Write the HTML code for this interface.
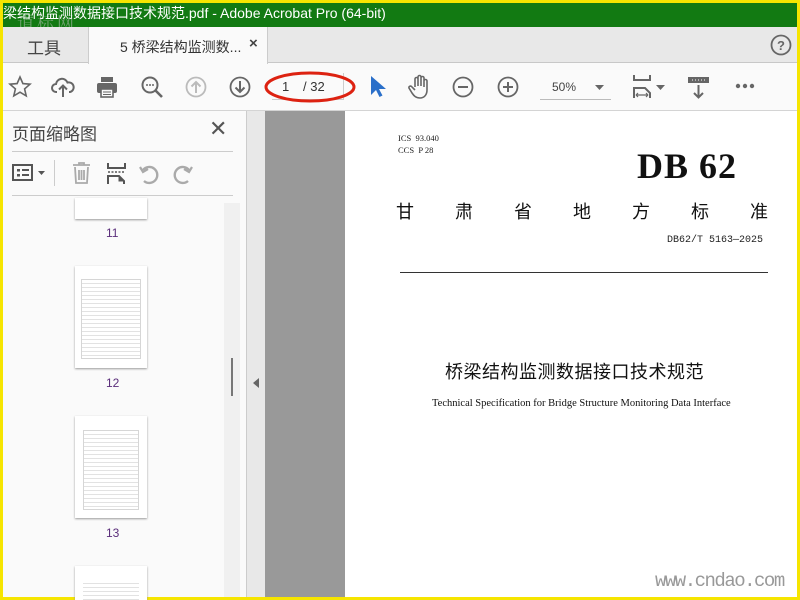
<!DOCTYPE html>
<html><head><meta charset="utf-8"><style>
*{margin:0;padding:0;box-sizing:border-box}
body{width:800px;height:600px;overflow:hidden;background:#f6e500;position:relative;font-family:"Liberation Sans","Noto Sans CJK SC",sans-serif}
.a{position:absolute}
svg{position:absolute;overflow:visible}
</style></head><body>
<div class="a" style="left:3px;top:3px;width:794px;height:594px;background:#fafafa"></div>
<!-- title bar -->
<div class="a" style="left:3px;top:3px;width:794px;height:24px;background:#127a12"></div>
<div class="a" style="left:17px;top:9px;color:rgba(200,200,200,.5);font-size:17px;letter-spacing:3px;font-family:'Noto Serif CJK SC',serif">道标网</div>
<div class="a" style="left:3px;top:4px;color:#fff;font-size:14px;line-height:18px;white-space:nowrap">梁结构监测数据接口技术规范.pdf - Adobe Acrobat Pro (64-bit)</div>
<!-- tab bar -->
<div class="a" style="left:3px;top:27px;width:794px;height:36px;background:#e8e8e8;border-bottom:1px solid #c8c8c8"></div>
<div class="a" style="left:88px;top:27px;width:180px;height:37px;background:#fafafa;border-left:1px solid #ccc;border-right:1px solid #ccc"></div>
<div class="a" style="left:27px;top:34px;font-size:17px;color:#444">工具</div>
<div class="a" style="left:120px;top:37px;font-size:14px;color:#333">5 桥梁结构监测数...</div>
<div class="a" style="left:249px;top:35px;font-size:15px;color:#444;font-weight:bold">×</div>
<svg style="left:770px;top:34px" width="22" height="22"><circle cx="11" cy="11" r="9.5" fill="none" stroke="#666" stroke-width="1.8"/><text x="11" y="16" font-size="13" font-weight="bold" text-anchor="middle" fill="#666" font-family="Liberation Sans">?</text></svg>
<!-- toolbar icons -->
<svg style="left:8px;top:75px" width="24" height="24"><path d="M12 2l2.9 6.6 7.1.6-5.4 4.7 1.6 7-6.2-3.7-6.2 3.7 1.6-7L2 9.2l7.1-.6z" fill="none" stroke="#666" stroke-width="1.6"/></svg>
<svg style="left:51px;top:75px" width="24" height="24"><path d="M6 17H5a4 4 0 010-8 6 6 0 0111.5-1.5A4.5 4.5 0 0119 17h-1M12 22V11M8 14.5l4-4 4 4" fill="none" stroke="#666" stroke-width="2"/></svg>
<svg style="left:95px;top:75px" width="24" height="24"><rect x="6" y="2" width="12" height="5" fill="#666"/><rect x="2" y="8" width="20" height="10" rx="2" fill="#666"/><rect x="6" y="14" width="12" height="8" fill="#fafafa" stroke="#666" stroke-width="1.6"/><line x1="8" y1="17" x2="16" y2="17" stroke="#666"/><line x1="8" y1="19.5" x2="16" y2="19.5" stroke="#666"/></svg>
<svg style="left:140px;top:75px" width="24" height="24"><circle cx="10" cy="10" r="7.5" fill="none" stroke="#666" stroke-width="2"/><path d="M15.5 15.5L22 22" stroke="#666" stroke-width="2.6"/><circle cx="7" cy="10" r="1" fill="#666"/><circle cx="10" cy="10" r="1" fill="#666"/><circle cx="13" cy="10" r="1" fill="#666"/></svg>
<svg style="left:185px;top:76px" width="22" height="22"><circle cx="11" cy="11" r="9.5" fill="none" stroke="#bbb" stroke-width="1.8"/><path d="M11 17V6M6.5 10.5L11 6l4.5 4.5" fill="none" stroke="#bbb" stroke-width="2"/></svg>
<svg style="left:229px;top:76px" width="22" height="22"><circle cx="11" cy="11" r="9.5" fill="none" stroke="#666" stroke-width="1.8"/><path d="M11 5v11M6.5 11.5L11 16l4.5-4.5" fill="none" stroke="#666" stroke-width="2"/></svg>
<div class="a" style="left:272px;top:73px;width:72px;height:27px;border-right:1px solid #ccc;border-bottom:1px solid #ccc"></div>
<div class="a" style="left:282px;top:79px;font-size:13px;color:#333">1</div>
<div class="a" style="left:303px;top:79px;font-size:13px;color:#333">/ 32</div>
<svg style="left:0;top:0" width="800" height="600"><ellipse cx="310" cy="87" rx="44" ry="14" fill="none" stroke="#d21" stroke-width="3"/></svg>
<svg style="left:369px;top:75px" width="16" height="24"><path d="M2 1v19l5-5 3.5 7 3-1.5-3.5-6.5h7z" fill="#2a6fc9"/></svg>
<svg style="left:408px;top:74px" width="24" height="26"><path d="M7 13V5a1.5 1.5 0 013 0v7V3a1.5 1.5 0 013 0v9V4a1.5 1.5 0 013 0v9V7a1.5 1.5 0 013 0v9c0 5-3 8-7 8s-6-2-8-5l-3-5a1.5 1.5 0 012.5-1.5L7 16" fill="none" stroke="#666" stroke-width="1.6"/></svg>
<svg style="left:452px;top:76px" width="22" height="22"><circle cx="11" cy="11" r="9.5" fill="none" stroke="#666" stroke-width="1.8"/><path d="M6 11h10" stroke="#666" stroke-width="2"/></svg>
<svg style="left:497px;top:76px" width="22" height="22"><circle cx="11" cy="11" r="9.5" fill="none" stroke="#666" stroke-width="1.8"/><path d="M6 11h10M11 6v10" stroke="#666" stroke-width="2"/></svg>
<div class="a" style="left:552px;top:80px;font-size:12px;color:#444">50%</div>
<svg style="left:595px;top:85px" width="10" height="6"><path d="M0 0h9L4.5 5z" fill="#666"/></svg>
<div class="a" style="left:540px;top:99px;width:71px;height:1px;background:#bbb"></div>
<svg style="left:632px;top:74px" width="24" height="26"><path d="M2 1v5h16V1M2 24v-10h11l5 5v5" fill="none" stroke="#666" stroke-width="2"/><path d="M4 21h12M4 21l2-2M4 21l2 2M16 21l-2-2M16 21l-2 2" stroke="#666" stroke-width="1.2" fill="none"/></svg>
<svg style="left:656px;top:85px" width="10" height="6"><path d="M0 0h9L4.5 5z" fill="#666"/></svg>
<svg style="left:687px;top:76px" width="24" height="24"><rect x="1" y="1" width="21" height="6" fill="#666"/><path d="M5 4h1M8 4h1M11 4h1M14 4h1M17 4h1" stroke="#fff" stroke-width="1"/><path d="M11.5 9v12M7 17l4.5 4.5L16 17" fill="none" stroke="#666" stroke-width="2"/></svg>
<svg style="left:735px;top:83px" width="22" height="6"><circle cx="3" cy="3" r="2.2" fill="#666"/><circle cx="10" cy="3" r="2.2" fill="#666"/><circle cx="17" cy="3" r="2.2" fill="#666"/></svg>
<div class="a" style="left:3px;top:110px;width:794px;height:1px;background:#d4d4d4"></div>
<!-- sidebar -->
<div class="a" style="left:12px;top:120px;font-size:17px;color:#444">页面缩略图</div>
<div class="a" style="left:209px;top:116px;font-size:22px;color:#555">✕</div>
<div class="a" style="left:12px;top:151px;width:221px;height:1px;background:#ccc"></div>
<div class="a" style="left:12px;top:195px;width:221px;height:1px;background:#ccc"></div>
<svg style="left:12px;top:164px" width="36" height="20"><rect x="1" y="1" width="19" height="15" fill="none" stroke="#555" stroke-width="2"/><rect x="5" y="5" width="3" height="2.5" fill="#555"/><rect x="5" y="10" width="3" height="2.5" fill="#555"/><path d="M10 6h7M10 11h7" stroke="#555" stroke-width="2"/><path d="M26 7h7l-3.5 4z" fill="#555"/></svg>
<div class="a" style="left:54px;top:160px;width:1px;height:26px;background:#ccc"></div>
<svg style="left:72px;top:162px" width="20" height="22"><path d="M1 3h17M7 3V1h5v2M3 5l1 16h11l1-16M7 8v10M9.5 8v10M12 8v10" fill="none" stroke="#aaa" stroke-width="1.8"/></svg>
<svg style="left:107px;top:162px" width="20" height="22"><path d="M1 1v5h17V1M1 22V14h11l5 5v3" fill="none" stroke="#555" stroke-width="2"/><path d="M1 10h17" stroke="#555" stroke-dasharray="2 1.5" stroke-width="1.5"/><path d="M12 14v5h5" fill="#555" stroke="#555"/></svg>
<svg style="left:139px;top:162px" width="22" height="22"><path d="M5 19A8 8 0 1 0 4 8" fill="none" stroke="#aaa" stroke-width="2.4"/><path d="M1 5l3 5 5-3" fill="none" stroke="#aaa" stroke-width="2.2"/></svg>
<svg style="left:172px;top:162px" width="22" height="22"><path d="M16 19A8 8 0 1 1 17 8" fill="none" stroke="#aaa" stroke-width="2.4"/><path d="M20 5l-3 5-5-3" fill="none" stroke="#aaa" stroke-width="2.2"/></svg>
<!-- thumbnails -->
<div class="a" style="left:75px;top:198px;width:72px;height:21px;background:#fff;box-shadow:0 1px 2px #999"></div>
<div class="a" style="left:106px;top:226px;font-size:12px;color:#5a2d7a">11</div>
<div class="a" style="left:75px;top:266px;width:72px;height:102px;background:#fff;box-shadow:0 1px 2px #999"></div>
<div class="a" style="left:81px;top:279px;width:60px;height:80px;background:repeating-linear-gradient(#fff 0 3px,#e2e2e2 3px 4px);border:1px solid #d6d6d6"></div>
<div class="a" style="left:106px;top:376px;font-size:12px;color:#5a2d7a">12</div>
<div class="a" style="left:75px;top:416px;width:72px;height:102px;background:#fff;box-shadow:0 1px 2px #999"></div>
<div class="a" style="left:83px;top:430px;width:56px;height:80px;background:repeating-linear-gradient(#fff 0 3px,#e2e2e2 3px 4px);border:1px solid #d6d6d6"></div>
<div class="a" style="left:106px;top:526px;font-size:12px;color:#5a2d7a">13</div>
<div class="a" style="left:75px;top:566px;width:72px;height:34px;background:#fff;box-shadow:0 1px 2px #999"></div>
<div class="a" style="left:83px;top:580px;width:56px;height:20px;background:repeating-linear-gradient(#fff 0 3px,#e2e2e2 3px 4px)"></div>
<div class="a" style="left:224px;top:203px;width:16px;height:394px;background:#f0f0f0"></div>
<div class="a" style="left:231px;top:358px;width:2px;height:38px;background:#777"></div>
<!-- splitter -->
<div class="a" style="left:246px;top:111px;width:1px;height:486px;background:#ccc"></div>
<div class="a" style="left:247px;top:111px;width:18px;height:486px;background:#e8e8e8"></div>
<svg style="left:253px;top:378px" width="6" height="10"><path d="M6 0v10L0 5z" fill="#666"/></svg>
<div class="a" style="left:265px;top:111px;width:80px;height:486px;background:#999"></div>
<div class="a" style="left:345px;top:111px;width:452px;height:486px;background:#fff"></div>
<!-- doc -->
<div class="a" style="left:398px;top:132px;font-size:8.5px;line-height:12px;color:#222;font-family:'Liberation Serif',serif">ICS&nbsp; 93.040<br>CCS&nbsp; P 28</div>
<div class="a" style="left:637px;top:147px;font-size:36px;line-height:38px;font-weight:bold;color:#111;font-family:'Liberation Serif',serif;letter-spacing:1px">DB 62</div>
<div class="a" style="left:396px;top:198px;width:372px;display:flex;justify-content:space-between;font-size:18px;color:#111"><span>甘</span><span>肃</span><span>省</span><span>地</span><span>方</span><span>标</span><span>准</span></div>
<div class="a" style="left:667px;top:235px;font-size:10px;color:#222;font-family:'Liberation Mono',monospace">DB62/T 5163—2025</div>
<div class="a" style="left:400px;top:272px;width:368px;height:1px;background:#333"></div>
<div class="a" style="left:445px;top:358px;font-size:18px;color:#111;letter-spacing:0.5px">桥梁结构监测数据接口技术规范</div>
<div class="a" style="left:432px;top:398px;font-size:10.5px;color:#111;font-family:'Liberation Serif',serif">Technical Specification for Bridge Structure Monitoring Data Interface</div>
<div class="a" style="left:655px;top:570px;font-size:19px;color:#999;font-family:'Liberation Mono',monospace;letter-spacing:-1.5px">www.cndao.com</div>
</body></html>
